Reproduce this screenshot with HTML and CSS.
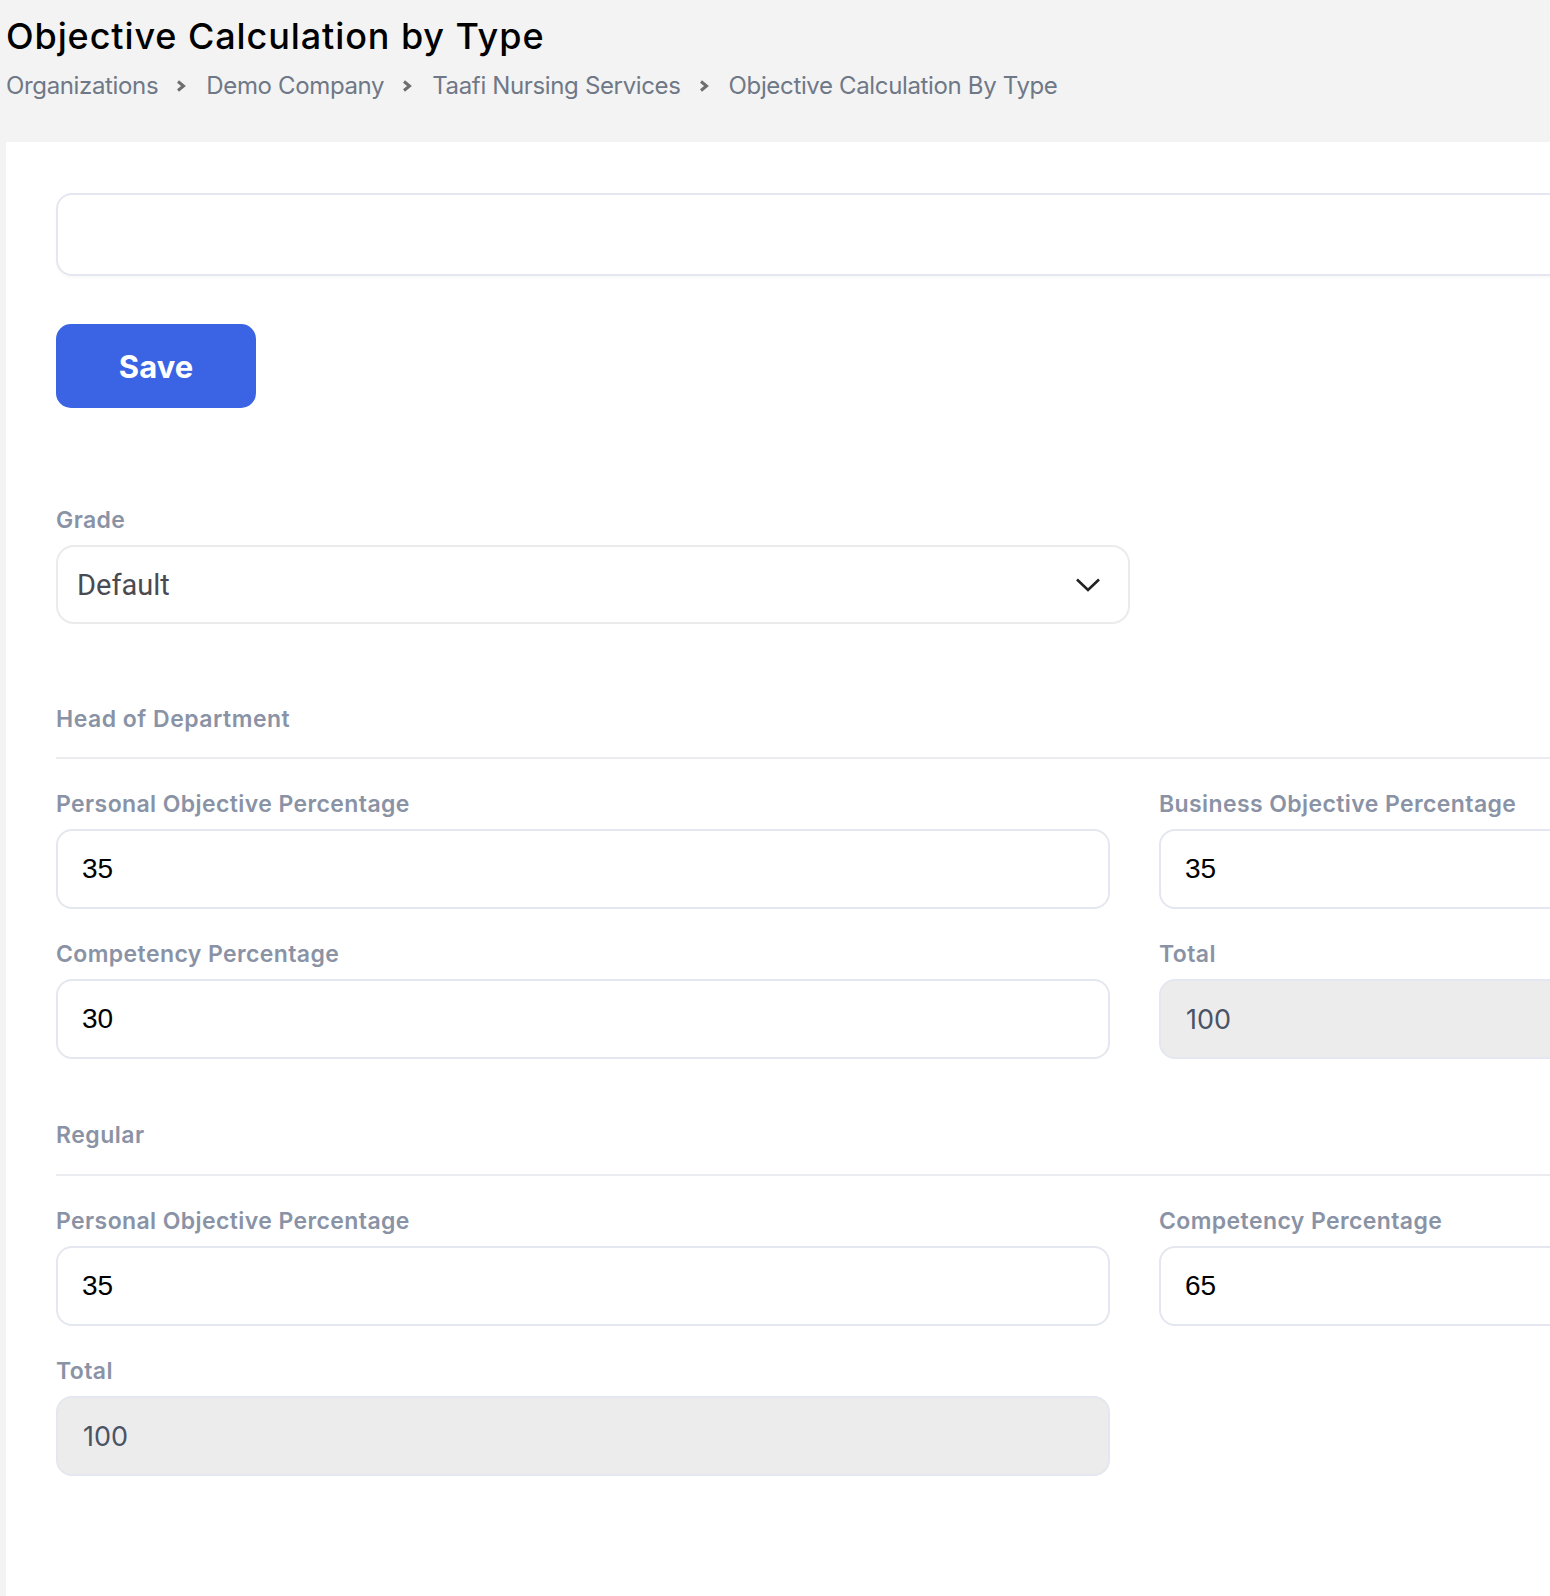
FILE: index.html
```html
<!DOCTYPE html>
<html lang="en">
<head>
<meta charset="UTF-8" />
<meta name="viewport" content="width=device-width, initial-scale=1" />
<title>Objective Calculation by Type</title>
<link rel="stylesheet" href="styles.css">
</head>
<body>

<header class="page-header">
  <h1 class="page-title">Objective Calculation by Type</h1>
  <nav class="crumbs">
    <span>Organizations</span>
    <svg class="crumb-sep" width="10" height="12" viewBox="0 0 10 12"><polyline points="2,1.5 7.5,6 2,10.5" fill="none" stroke="currentColor" stroke-width="3" /></svg>
    <span>Demo Company</span>
    <svg class="crumb-sep" width="10" height="12" viewBox="0 0 10 12"><polyline points="2,1.5 7.5,6 2,10.5" fill="none" stroke="currentColor" stroke-width="3" /></svg>
    <span>Taafi Nursing Services</span>
    <svg class="crumb-sep" width="10" height="12" viewBox="0 0 10 12"><polyline points="2,1.5 7.5,6 2,10.5" fill="none" stroke="currentColor" stroke-width="3" /></svg>
    <span>Objective Calculation By Type</span>
  </nav>
</header>

<main class="panel">
  <div class="form-wrap">
    <div class="name-box"></div>

    <button class="btn-save">Save</button>

    <div class="grade-field">
      <label class="field-label">Grade</label>
      <div class="select-box">
        <span>Default</span>
        <svg width="26" height="16" viewBox="0 0 26 16"><polyline points="2,2.5 13,13 24,2.5" fill="none" stroke="#222" stroke-width="2.6" /></svg>
      </div>
    </div>

    <section class="calc-section">
      <h2 class="section-title">Head of Department</h2>
      <div class="field-grid">
        <div class="field">
          <label class="field-label">Personal Objective Percentage</label>
          <div class="num-input">35</div>
        </div>
        <div class="field">
          <label class="field-label">Business Objective Percentage</label>
          <div class="num-input">35</div>
        </div>
        <div class="field">
          <label class="field-label">Competency Percentage</label>
          <div class="num-input">30</div>
        </div>
        <div class="field">
          <label class="field-label">Total</label>
          <div class="num-input total">100</div>
        </div>
      </div>
    </section>

    <section class="calc-section regular">
      <h2 class="section-title">Regular</h2>
      <div class="field-grid">
        <div class="field">
          <label class="field-label">Personal Objective Percentage</label>
          <div class="num-input">35</div>
        </div>
        <div class="field">
          <label class="field-label">Competency Percentage</label>
          <div class="num-input">65</div>
        </div>
        <div class="field">
          <label class="field-label">Total</label>
          <div class="num-input total">100</div>
        </div>
      </div>
    </section>
  </div>
</main>

</body>
</html>
```

FILE: styles.css
```css
html, body { margin: 0; padding: 0; }
body {
  background: #f3f3f3;
  font-family: Inter, "Noto Sans", sans-serif;
  overflow: hidden;
  min-height: 1596px;
}

.page-header {
  height: 142px;
  padding: 14px 0 0 6px;
  box-sizing: border-box;
}
.page-title {
  margin: 0;
  font-size: 36px;
  line-height: 44px;
  font-weight: 500;
  color: #000;
  letter-spacing: 0.9px;
}
.crumbs {
  margin-top: 12px;
  display: flex;
  align-items: center;
  font-size: 24px;
  line-height: 32px;
  color: #6f7886;
  letter-spacing: -0.35px;
}
.crumb-sep {
  color: #6e6e6e;
  margin: 0 20px 0 18px;
}

.panel {
  margin-left: 6px;
  background: #fff;
  min-height: 1454px;
  padding: 51px 0 0 50px;
  box-sizing: border-box;
}
.form-wrap {
  width: 2157px;
}

.name-box {
  height: 83px;
  border: 2px solid #e4e7ef;
  border-radius: 16px;
  box-sizing: border-box;
  box-shadow: 0 2px 3px rgba(0,0,0,0.03);
}

.btn-save {
  display: block;
  margin-top: 48px;
  width: 200px;
  height: 84px;
  background: #3a64e3;
  color: #fff;
  border: none;
  border-radius: 15px;
  font-family: Inter, sans-serif;
  font-size: 31px;
  font-weight: 700;
  cursor: pointer;
}

.grade-field {
  margin-top: 97px;
  width: 1074px;
}
.field-label {
  display: block;
  font-size: 23px;
  line-height: 30px;
  font-weight: 600;
  color: #8a93a5;
  letter-spacing: 0.4px;
  margin-bottom: 10px;
}
.select-box {
  height: 79px;
  border: 2px solid #ebebeb;
  border-radius: 18px;
  box-sizing: border-box;
  display: flex;
  align-items: center;
  justify-content: space-between;
  padding: 0 27px 0 19px;
  font-family: Roboto, sans-serif;
  font-size: 29px;
  color: #4a4a52;
}

.calc-section {
  margin-top: 80px;
}
.calc-section.regular {
  margin-top: 61px;
}
.section-title {
  margin: 0;
  font-size: 23px;
  line-height: 30px;
  font-weight: 600;
  color: #8a93a5;
  letter-spacing: 0.5px;
  padding-bottom: 23px;
  border-bottom: 2px solid #ebecef;
}
.regular .section-title {
  padding-bottom: 24px;
}
.field-grid {
  margin-top: 30px;
  display: grid;
  grid-template-columns: 1054px 1054px;
  column-gap: 49px;
  row-gap: 30px;
}
.num-input {
  height: 80px;
  border: 2px solid #e4e7ef;
  border-radius: 16px;
  box-sizing: border-box;
  display: flex;
  align-items: center;
  padding-left: 24px;
  font-family: "Liberation Sans", Arial, sans-serif;
  font-size: 28px;
  color: #000;
}
.num-input.total {
  background: #ececec;
  font-family: Inter, sans-serif;
  font-size: 27px;
  color: #4a5366;
  padding-left: 25px;
}
```
